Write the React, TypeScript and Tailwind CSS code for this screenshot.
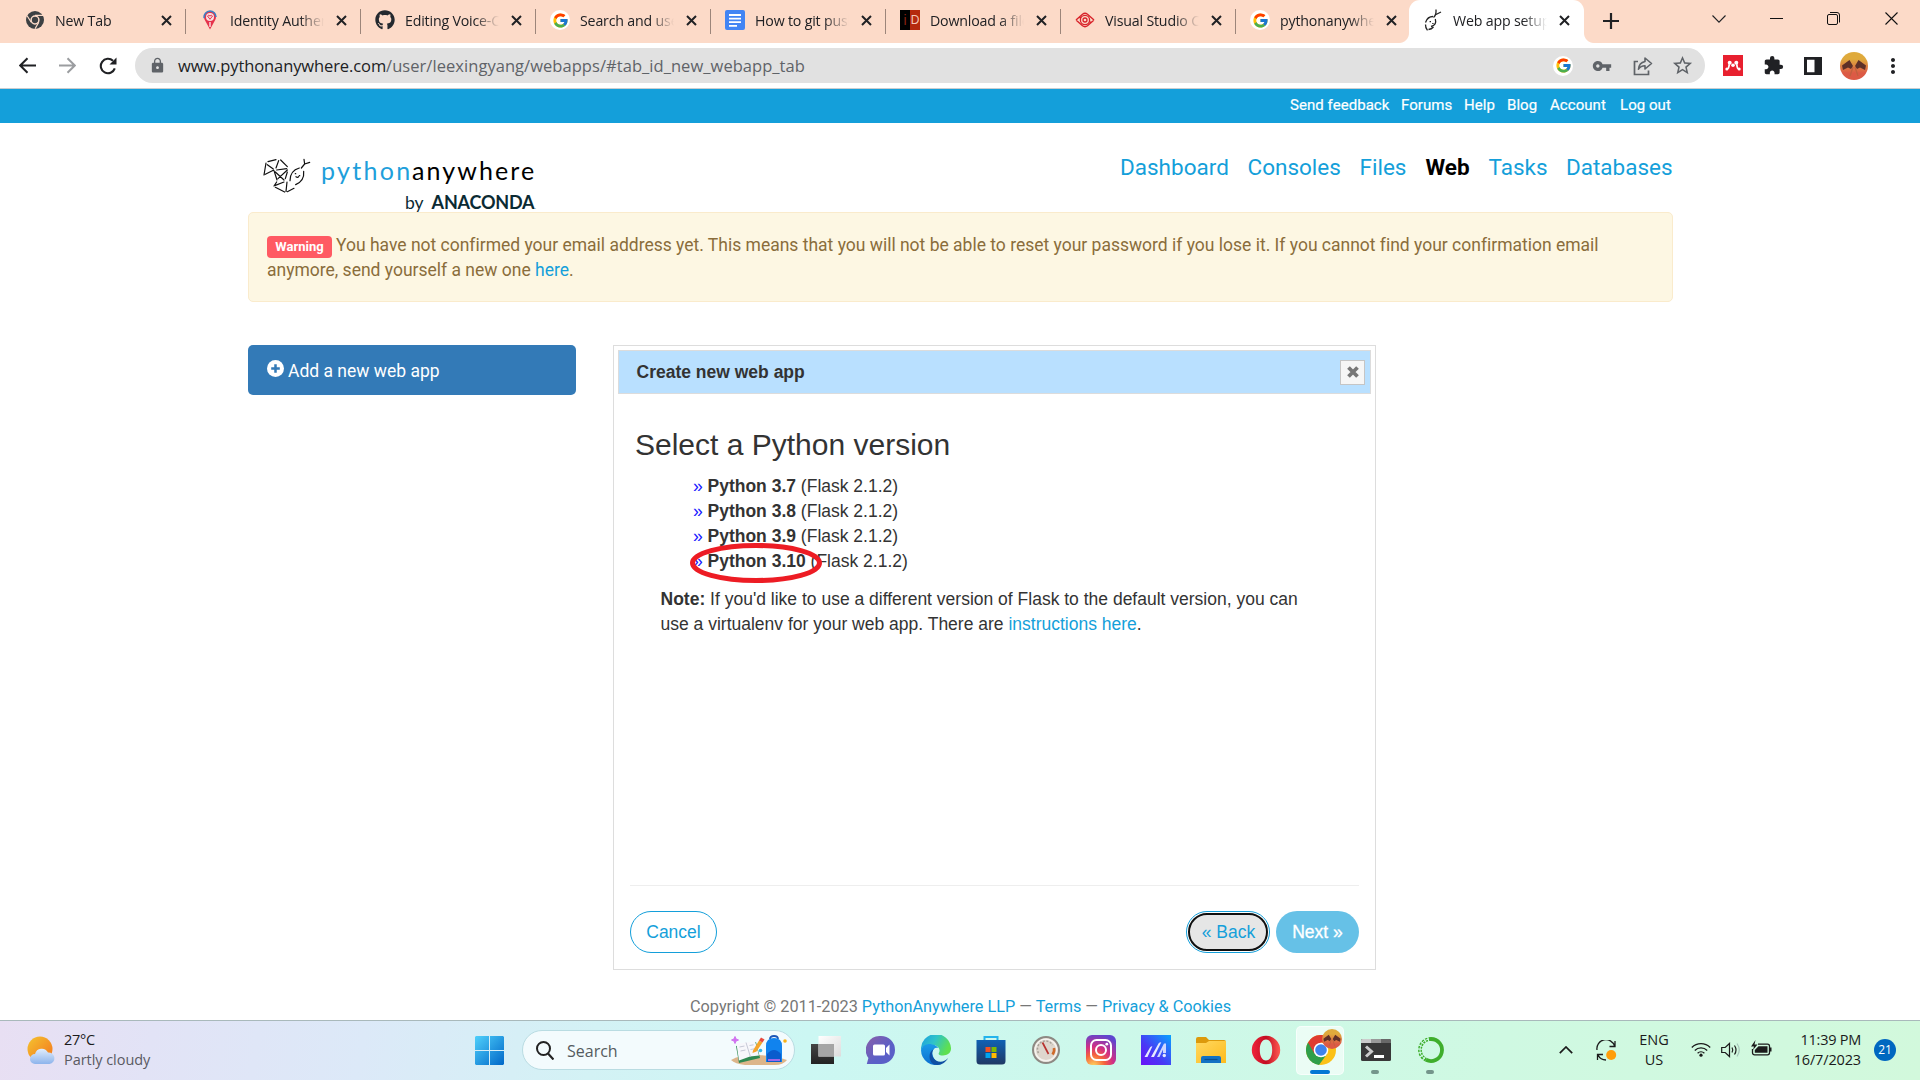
import React from "react";
import { FcGoogle } from "react-icons/fc";
import { FaGithub } from "react-icons/fa";
import { MdExtension, MdVpnKey, MdLock, MdStarBorder, MdMoreVert } from "react-icons/md";

const Svg = ({ w, h, vb, className = "", children }: { w: number; h: number; vb?: string; className?: string; children: React.ReactNode }) => (
  <svg width={w} height={h} viewBox={vb ?? `0 0 ${w} ${h}`} fill="none" className={`block shrink-0 ${className}`}>
    {children}
  </svg>
);

const GoogleBadge = () => (
  <span className="flex size-5 items-center justify-center rounded-full bg-white">
    <FcGoogle size={17} />
  </span>
);

const ChromeMono = () => (
  <Svg w={18} h={18}>
    <circle cx="9" cy="9" r="9" fill="#3c4043" />
    <circle cx="9" cy="9" r="3.9" fill="none" stroke="#fcdac8" strokeWidth="1.5" />
    <path d="M9 4.4h8M5.2 11.3L1.1 4.8M12.8 11.3L9 17.8" stroke="#fcdac8" strokeWidth="1.2" />
  </Svg>
);

const PinIcon = () => (
  <Svg w={14} h={20}>
    <path d="M7 19.5L1.8 10A6 6 0 1 1 12.2 10z" fill="#e5334b" />
    <path d="M1.2 8A6 6 0 0 1 7 1a6 6 0 0 1 6 6" stroke="#3d7fc4" strokeWidth="1.6" />
    <circle cx="7" cy="7" r="4" fill="#f9dfe0" />
    <path d="M4.5 6q1.2-1.5 2.5 0 1.3-1.5 2.5 0L7 9.3z" stroke="#e5334b" strokeWidth="1" />
    <path d="M7 12v5" stroke="#fff" strokeWidth="1.2" />
  </Svg>
);

const DocsIcon = () => (
  <Svg w={20} h={20}>
    <rect width="20" height="20" rx="2" fill="#4285f4" />
    <path d="M4 5h12M4 8.600h12M4 12.2h12M4 15.8h8" stroke="#fff" strokeWidth="1.8" />
  </Svg>
);

const IdIcon = () => (
  <span className="flex size-5 font-['Liberation_Sans'] text-[14px] leading-5">
    <span className="w-2.5 bg-black text-center text-[#8c2413]">i</span>
    <span className="w-2.5 bg-[#b5290e] text-center text-[12px] text-[#f3c7b9]">D</span>
  </span>
);

const EyeIcon = () => (
  <Svg w={20} h={16}>
    <path d="M1 8L7.5 2.2Q10 .3 12.5 2.2L19 8M1 8l6.5 5.8q2.5 1.9 5 0L19 8M4 5.2q6 .6 11.5 5.2" stroke="#d8232a" strokeWidth="1.4" />
    <circle cx="10" cy="8" r="4.6" stroke="#d8232a" strokeWidth="1.3" fill="#fcdac8" />
    <circle cx="10" cy="8" r="2" stroke="#d8232a" strokeWidth="1.3" />
  </Svg>
);

const SnakeIcon = () => (
  <Svg w={18} h={22}>
    <path d="M1.500 13.500Q3.500 7.500 9 7.500M11.300 10Q13 16 7 17.500M1.500 15.500Q1.300 18.500 3.500 21.300M4.500 20.500q3-.2 5-2.500M9.500 8.500q3-2.500 2.500-8M12 5.500L17 3" stroke="#222" strokeWidth="1.300" />
    <path d="M5.600 12.600h1.400M8.200 14.500h1.400" stroke="#222" strokeWidth="1.200" />
  </Svg>
);

const tabs = [
  { title: "New Tab", icon: <ChromeMono /> },
  { title: "Identity Authentication", icon: <PinIcon /> },
  { title: "Editing Voice-Chat", icon: <FaGithub size={20} color="#24292f" /> },
  { title: "Search and use", icon: <GoogleBadge /> },
  { title: "How to git push", icon: <DocsIcon /> },
  { title: "Download a file", icon: <IdIcon /> },
  { title: "Visual Studio Code", icon: <EyeIcon /> },
  { title: "pythonanywhere", icon: <GoogleBadge /> },
  { title: "Web app setup:", icon: <SnakeIcon />, active: true },
];

const Cross = () => (
  <Svg w={11} h={11}>
    <path d="M1 1l9 9M10 1l-9 9" stroke="#202124" strokeWidth="2" />
  </Svg>
);

function TabStrip() {
  return (
    <div className="flex h-[43px] bg-[#fcdac8] pl-[11px] font-['Open_Sans',sans-serif]">
      {tabs.map((t, i) => (
        <div key={i} className={`relative flex h-[43px] w-[175px] shrink-0 items-center pb-[3px] ${t.active ? "-ml-[2px] rounded-t-[11px] bg-white" : ""}`}>
          <div className="ml-[14px] flex w-5 justify-center">{t.icon}</div>
          <div className="ml-[10px] w-[94px] overflow-hidden whitespace-nowrap pt-px text-[14.200px] leading-[22px] tracking-[-0.180px] text-[#202124] [mask-image:linear-gradient(to_right,black_74%,transparent)]">{t.title}</div>
          <div className="ml-[12px]"><Cross /></div>
          {i < 7 && <div className="absolute right-0 top-[9px] h-[25px] w-px bg-[#9c857a]" />}
          {t.active && <div className="absolute -left-[10px] bottom-0 size-[10px] bg-[radial-gradient(circle_at_0_0,#fcdac8_9.5px,white_10.5px)]" />}
          {t.active && <div className="absolute -right-[10px] bottom-0 size-[10px] bg-[radial-gradient(circle_at_100%_0,#fcdac8_9.5px,white_10.5px)]" />}
        </div>
      ))}
      <Svg w={16} h={16} className="ml-[19px] mt-[13px]"><path d="M8 0v16M0 8h16" stroke="#202124" strokeWidth="2.2" /></Svg>
      <Svg w={14} h={8} className="ml-[93px] mt-[15px]"><path d="M.5 .5L7 7.2 13.5 .5" stroke="#202124" strokeWidth="1.1" /></Svg>
      <Svg w={13} h={2} className="ml-[44px] mt-[18px]"><path d="M0 .5h13" stroke="#111" /></Svg>
      <Svg w={13} h={13} className="ml-[44px] mt-[12px]">
        <rect x=".5" y="2.5" width="10" height="10" rx="1.5" stroke="#111" />
        <path d="M3 .5h7a2.5 2.5 0 0 1 2.5 2.5v7.5" stroke="#111" />
      </Svg>
      <Svg w={13} h={13} className="ml-[45px] mt-[12px]"><path d="M.5 .5l12 12M12.500 .5l-12 12" stroke="#111" strokeWidth="1.1" /></Svg>
    </div>
  );
}

const Avatar = ({ size }: { size: number }) => (
  <Svg w={size} h={size} vb="0 0 28 28">
    <defs>
      <linearGradient id="av" x1="0" y1="0" x2="0" y2="1"><stop offset=".25" stopColor="#dfaa3c" /><stop offset=".75" stopColor="#dc5a45" /></linearGradient>
    </defs>
    <circle cx="14" cy="14" r="14" fill="url(#av)" />
    <path d="M2 13.500L9.500 8l3.500 6-2 3-3-1.500L3 18zM26 13.500L18.500 8 15 14l2 3 3-1.500 5 2.500z" fill="#5e3028" />
    <path d="M13 15l-3 9M15 15l3 9" stroke="#c0603f" strokeWidth="1.300" />
  </Svg>
);

function Toolbar() {
  return (
    <div className="flex h-[45px] items-center bg-white pl-[19px]">
      <Svg w={17} h={17}><path d="M17 8.500H1.500M8.500 1.200L1.200 8.500l7.300 7.300" stroke="#202124" strokeWidth="2" /></Svg>
      <Svg w={17} h={17} className="ml-[23px]"><path d="M0 8.500h15.500M8.500 1.200l7.300 7.300-7.300 7.300" stroke="#9b9da0" strokeWidth="2" /></Svg>
      <Svg w={18} h={18} className="ml-[23px]">
        <path d="M15.800 11.400A7.200 7.200 0 1 1 14 3.800" stroke="#202124" strokeWidth="2.100" />
        <path d="M17.500 .5v7h-7z" fill="#202124" />
      </Svg>
      <div className="ml-[18px] flex h-[35px] w-[1570px] items-center rounded-full bg-[#e1e1e1] pl-[14px]">
        <MdLock size={17} color="#5f6368" />
        <div className="ml-[12px] whitespace-nowrap font-['Open_Sans',sans-serif] text-[16.500px] leading-6 text-[#5f6368]">
          <span className="tracking-[-0.1px] text-[#202124]">www.pythonanywhere.com</span><span className="tracking-[0.050px]">/user/leexingyang/webapps/#tab_id_new_webapp_tab</span>
        </div>
        <div className="ml-auto mr-[11px] flex items-center">
          <GoogleBadge />
          <MdVpnKey size={20} color="#5f6368" className="ml-[19px]" />
          <Svg w={20} h={20} className="ml-[21px]">
            <path d="M5 5.500H1.500v13h14v-4" stroke="#5f6368" strokeWidth="1.700" />
            <path d="M12 2l6.500 5.500L12 13v-3.200q-4.500 0-6.500 3.400.5-6.400 6.500-7.700z" stroke="#5f6368" strokeWidth="1.600" strokeLinejoin="round" />
          </Svg>
          <MdStarBorder size={23} color="#5f6368" className="ml-[18px]" />
        </div>
      </div>
      <Svg w={20} h={21} className="ml-[18px]">
        <rect width="20" height="21" fill="#e8202f" />
        <path d="M4 14.200q2-.7 2.200-5M16 14.200q-2-.7-2.200-5" stroke="#fff" strokeWidth="1.800" />
        <circle cx="6.700" cy="7.700" r="2" fill="#fff" /><circle cx="13.300" cy="7.700" r="2" fill="#fff" />
        <circle cx="10" cy="10.300" r="1.800" fill="#fff" /><circle cx="3.800" cy="14" r="1.500" fill="#fff" /><circle cx="16.200" cy="14" r="1.500" fill="#fff" />
      </Svg>
      <MdExtension size={21} color="#202124" className="ml-[20px]" />
      <Svg w={18} h={18} className="ml-[20px]"><path d="M0 0h18v18H0zM3 2.800v12.400h7.500V2.800z" fill="#202124" fillRule="evenodd" /></Svg>
      <span className="ml-[18px]"><Avatar size={28} /></span>
      <MdMoreVert size={24} color="#202124" className="ml-[13px]" />
    </div>
  );
}

function Logo() {
  return (
    <div className="relative h-[89px] w-[300px]">
      <div className="absolute left-[14px] top-[34px]">
        <Svg w={50} h={37} vb="34 35 150 111">
          <g stroke="#111" strokeWidth="3.600" strokeLinecap="round">
            <path d="M46 53l-6 36M52 49l24-6M84 46L76 68M90 44l20 20M50 58l18 13M44 87l24-12M78 74l30-4M70 76l9 28M74 80l26 24M82 100l28-26M110 80l-6 20M78 110l-8 12M74 120l26-10M74 126l28 14M109 110l-3 28M110 139l20-10" />
            <path d="M118 106Q118 76 146 68M159 78q3 28-24 40M152 68l10-12-2-14M162 56l15-5M136 94q5 4 8 0" />
            <path d="M134 85h1M146 91h1" strokeWidth="4" />
          </g>
        </Svg>
      </div>
      <div className="absolute left-[73px] top-[32px] flex whitespace-nowrap font-['Lato'] text-[25px] leading-[30px] text-black">
        <span className="w-[91px] tracking-[2.300px] text-[#1f9fdb]">python</span><span className="tracking-[2.100px]">anywhere</span>
      </div>
      <div className="absolute left-[157px] top-[67px] flex items-baseline whitespace-nowrap font-['Lato'] leading-[24px] text-[#0b2a33]">
        <span className="text-[17.500px]">by</span>
        <span className="ml-[8px] text-[18px] font-bold tracking-[-0.200px]">ANACONDA</span>
        <span className="text-[8px] text-gray-400">.</span>
      </div>
    </div>
  );
}

const Row = ({ v }: { v: string }) => (
  <li className="flex h-[25px] whitespace-pre">
    <span className="w-[14.500px] text-[#1a1aff]">»</span><span><b>Python {v}</b> (Flask 2.1.2)</span>
  </li>
);

function Wizard() {
  return (
    <div className="flex h-[625px] w-[763px] flex-col border border-[#ddd] px-1 pt-1 font-['Liberation_Sans',Arial,sans-serif] text-[17.500px] leading-[25px] text-[#333]">
      <div className="flex h-[44px] items-center border border-[#dcdcdc] bg-[#b9e0ff] pl-[17.500px] pr-[5px] font-bold">
        Create new web app
        <div className="ml-auto flex size-[25px] items-center justify-center border border-[#c5c5c5] bg-[#f6f6f6]">
          <Svg w={14} h={14}><path d="M2.500 2.500l9 9M11.500 2.500l-9 9" stroke="#777" strokeWidth="3.800" /></Svg>
        </div>
      </div>
      <h2 className="ml-[17px] mt-[33px] text-[30px] leading-[35px]">Select a Python version</h2>
      <ul className="ml-[75px] mt-[12px]">
        <Row v="3.7" />
        <Row v="3.8" />
        <Row v="3.9" />
        <li className="relative">
          <ul><Row v="3.10" /></ul>
          <Svg w={132} h={40} className="absolute -left-[3px] -top-[6px]"><ellipse cx="66" cy="20" rx="63.500" ry="17.500" stroke="#ed1c24" strokeWidth="5" /></Svg>
        </li>
      </ul>
      <p className="ml-[42.500px] mt-[13px] w-[670px]">
        <b>Note:</b> If you'd like to use a different version of Flask to the default version, you can use a virtualenv for your web app. There are <span className="text-[#149fda]">instructions here</span>.
      </p>
      <div className="mx-[12px] mb-[16px] mt-auto flex h-[68px] items-end border-t border-[#eee]">
        <button className="h-[42px] w-[87px] rounded-full border border-[#149fda] text-[#149fda]">Cancel</button>
        <button className="ml-auto h-[42px] w-[84px] rounded-full border border-[#149fda] bg-white p-px text-[#149fda]">
          <span className="flex h-[38px] items-center justify-center rounded-full border-2 border-[#101010] bg-[#e6e6e6] pl-px">« Back</span>
        </button>
        <button className="ml-[6px] h-[42px] w-[83px] rounded-full bg-[#66c1e7] text-white [-webkit-text-stroke:0.3px_white]">Next »</button>
      </div>
    </div>
  );
}

function Page() {
  return (
    <div className="flex h-[932px] flex-col bg-white font-['Roboto',sans-serif]">
      <div className="h-[35px] shrink-0 border-t border-[#c9cdd0] bg-[#149fda]">
        <div className="ml-[1290px] flex pt-[4px] text-[15px] leading-[24px] text-white [-webkit-text-stroke:0.2px_white]">
          <span className="w-[111px] tracking-[0.050px]">Send feedback</span>
          <span className="w-[63px] tracking-[0.050px]">Forums</span>
          <span className="w-[43px] tracking-[0.050px]">Help</span>
          <span className="w-[43px] tracking-[0.050px]">Blog</span>
          <span className="w-[70px] tracking-[0.050px]">Account</span>
          <span className="tracking-[0.050px]">Log out</span>
        </div>
      </div>
      <div className="ml-[248px] flex h-[89px] w-[1425px] shrink-0">
        <Logo />
        <nav className="ml-[572px] flex pt-[27px] text-[22.500px] leading-[34px] text-[#149fda]">
          <span className="w-[127.500px]">Dashboard</span>
          <span className="w-[112px]">Consoles</span>
          <span className="w-[66px]">Files</span>
          <span className="w-[63px] font-bold text-black">Web</span>
          <span className="w-[77.500px]">Tasks</span>
          <span>Databases</span>
        </nav>
      </div>
      <div className="ml-[248px] h-[90px] w-[1425px] shrink-0 rounded-[5px] border border-[#faebcc] bg-[#fdf7e3] pl-[18px] pt-[20px] text-[17.500px] leading-[25px] text-[#8a6d3b]">
        <div className="flex h-[25px] whitespace-nowrap">
          <span className="mr-[4px] mt-[3px] h-[22px] w-[65px] rounded-[4px] bg-[#ff5a63] text-center text-[13px] font-bold leading-[22px] text-white">Warning</span>
          <span className="tracking-[-0.005px]">You have not confirmed your email address yet. This means that you will not be able to reset your password if you lose it. If you cannot find your confirmation email</span>
        </div>
        <div>anymore, send yourself a new one <span className="text-[#149fda]">here</span>.</div>
      </div>
      <div className="ml-[248px] mt-[43px] flex items-start">
        <div className="mr-[37px] flex h-[50px] w-[328px] items-center rounded-[5px] bg-[#337ab7] pl-[19px] pt-px text-[17.500px] text-white">
          <Svg w={17} h={17} className="-mt-[4px] mr-[4px]">
            <circle cx="8.500" cy="8.500" r="8.500" fill="#fff" />
            <path d="M8.500 4.200v8.600M4.200 8.500h8.600" stroke="#337ab7" strokeWidth="2.500" />
          </Svg>
          <span className="pt-px">Add a new web app</span>
        </div>
        <Wizard />
      </div>
      <div className="ml-[690px] mt-[25px] whitespace-nowrap text-[16.250px] leading-[24px] text-[#777]">
        Copyright © 2011-2023 <span className="text-[#149fda]">PythonAnywhere LLP</span> — <span className="text-[#149fda]">Terms</span> — <span className="text-[#149fda]">Privacy &amp; Cookies</span>
      </div>
    </div>
  );
}

const apps: { icon: React.ReactNode; dot?: boolean; active?: boolean }[] = [
  { icon: (
    <Svg w={30} h={30}>
      <defs>
        <linearGradient id="tvd" x1="0" y1="0" x2="0" y2="1"><stop stopColor="#444" /><stop offset="1" stopColor="#222" /></linearGradient>
        <linearGradient id="tvl" x1="0" y1="0" x2="1" y2="1"><stop stopColor="#fff" /><stop offset="1" stopColor="#dcdcdc" /></linearGradient>
      </defs>
      <rect y="9" width="23" height="20" fill="url(#tvd)" /><rect x="7.500" y="1" width="22.500" height="20.500" fill="url(#tvl)" /><path d="M7.500 9H23v12.500H7.500z" fill="#a5a5a5" />
    </Svg>) },
  { icon: (
    <Svg w={30} h={30}>
      <defs><linearGradient id="ch" x1="0" y1="0" x2="1" y2="1"><stop stopColor="#8a5fa8" /><stop offset=".6" stopColor="#5b5fc7" /></linearGradient></defs>
      <path d="M15 1a14 14 0 1 1 0 28H.8l1.600-6A14 14 0 0 1 15 1z" fill="url(#ch)" />
      <rect x="7" y="9.500" width="12" height="11" rx="1.500" fill="#fff" /><path d="M20 13l3.500-3.500v11L20 17z" fill="#fff" />
    </Svg>) },
  { icon: (
    <Svg w={30} h={30}>
      <defs>
        <linearGradient id="e1" x1="0" y1="0" x2="1" y2=".4"><stop stopColor="#1b9de2" /><stop offset=".5" stopColor="#2fc3c9" /><stop offset="1" stopColor="#5fe04f" /></linearGradient>
        <linearGradient id="e2" x1="0" y1="0" x2="0" y2="1"><stop stopColor="#1a9be8" /><stop offset="1" stopColor="#0c6fd0" /></linearGradient>
      </defs>
      <path d="M0 15A15 15 0 0 1 30 13c.3 5-3.500 7.500-8 7.500-4 0-5-1.300-4-2.800C20 14 16.500 10 12 10 6 9 2 11 0 15z" fill="url(#e1)" />
      <path d="M0 15c1.500-5 7-7 11.500-5.500 3 .5 5 2 6 3.500-4-1-7 2-6 6.500 1 5 5 8.500 9 9.500A15 15 0 0 1 0 15z" fill="url(#e2)" />
      <path d="M13 14c-3 3-2.500 9 2 11.500 4 2.200 8.500 1.500 12-2.500-3 6-9 8-14 6.500C7 27 7 16 13 14z" fill="#0f4fa3" />
    </Svg>) },
  { icon: (
    <Svg w={30} h={30}>
      <defs><linearGradient id="st" x1="0" y1="0" x2="0" y2="1"><stop stopColor="#0f61b4" /><stop offset="1" stopColor="#203864" /></linearGradient></defs>
      <path d="M8.500 6V2h13v4" stroke="#23b4ec" strokeWidth="2" />
      <path d="M.5 5h29v21a3.500 3.500 0 0 1-3.500 3.500H4A3.500 3.500 0 0 1 .5 26z" fill="url(#st)" />
      <path d="M9.500 12h5v5h-5z" fill="#f25022" /><path d="M15.500 12h5v5h-5z" fill="#7fba00" /><path d="M9.500 18h5v5h-5z" fill="#00a4ef" /><path d="M15.500 18h5v5h-5z" fill="#ffb900" />
    </Svg>) },
  { icon: (
    <Svg w={30} h={30}>
      <circle cx="15" cy="15" r="13" fill="#ded6cd" stroke="#8d8983" strokeWidth="2" /><circle cx="15" cy="15" r="10.800" stroke="#f5f3ef" strokeWidth="1.500" />
      <path d="M7.500 18a8 8 0 0 1 14-8" stroke="#a8a199" strokeWidth="1.600" strokeDasharray="2 1.500" /><path d="M23 13a8 8 0 0 1-1.500 6.500" stroke="#cf6a2a" strokeWidth="2.600" />
      <path d="M11.500 7.500l6 11.500" stroke="#b8322f" strokeWidth="1.700" />
    </Svg>) },
  { icon: (
    <Svg w={30} h={30}>
      <defs><radialGradient id="ig" cx=".25" cy="1.050" r="1.100"><stop offset=".05" stopColor="#fecb5a" /><stop offset=".35" stopColor="#f5633c" /><stop offset=".6" stopColor="#d22f85" /><stop offset="1" stopColor="#5f45cf" /></radialGradient></defs>
      <rect width="30" height="30" rx="6" fill="url(#ig)" /><rect x="5" y="5" width="20" height="20" rx="5.500" stroke="#fff" strokeWidth="2" /><circle cx="15" cy="15" r="5" stroke="#fff" strokeWidth="2" /><circle cx="20.800" cy="9.200" r="1.400" fill="#fff" />
    </Svg>) },
  { icon: (
    <Svg w={30} h={30}>
      <defs><linearGradient id="ma" x1="1" y1="0" x2="0" y2="1"><stop stopColor="#08a2ff" /><stop offset=".6" stopColor="#4a37f5" /><stop offset="1" stopColor="#6a12f8" /></linearGradient></defs>
      <rect width="30" height="30" fill="url(#ma)" />
      <path d="M3.500 22L9 12.500q.8-1.300 2.400-1.300L6.500 22zM10 22l7.500-13.500q.8-1.200 2.800-1.200L13 22z" fill="#e6e9ff" /><path d="M16 22L23 8.500h2V18h-3v-3.500L18.500 22z" fill="#cfd6ff" /><circle cx="23.300" cy="20.500" r="1.700" fill="#e6e9ff" />
    </Svg>) },
  { icon: (
    <Svg w={30} h={30}>
      <defs><linearGradient id="fo" x1="0" y1="0" x2="1" y2="1"><stop stopColor="#ffd860" /><stop offset="1" stopColor="#fdbb1d" /></linearGradient></defs>
      <path d="M0 4a2 2 0 0 1 2-2h8l3 3h15a2 2 0 0 1 2 2v6H0z" fill="#dc9a0c" /><path d="M0 8h10l3-2h17v22H0z" fill="url(#fo)" />
      <path d="M5 28v-5a2 2 0 0 1 2-2h16a2 2 0 0 1 2 2v5z" fill="#1372c4" /><path d="M8.500 24.500h13" stroke="#0b4f91" strokeWidth="1.200" />
    </Svg>) },
  { icon: (
    <Svg w={30} h={30}>
      <defs><linearGradient id="op" x1="0" y1="0" x2="1" y2="0"><stop stopColor="#f0233a" /><stop offset=".5" stopColor="#c20d22" /><stop offset="1" stopColor="#ff5a52" /></linearGradient></defs>
      <path fillRule="evenodd" d="M15 .8a14.200 14.200 0 1 1 0 28.400 14.200 14.200 0 0 1 0-28.400zM15 4.500C11 4.500 8.800 9 8.800 15S11 25.500 15 25.500 21.200 21 21.200 15 19 4.500 15 4.500z" fill="url(#op)" />
    </Svg>) },
  { active: true, icon: (
    <Svg w={30} h={30}>
      <circle cx="15" cy="15" r="15" fill="#fbc116" />
      <path d="M15 15L2 7.500A15 15 0 0 0 13 29.900L21 19z" fill="#2f9f4a" /><path d="M2 7.500a15 15 0 0 1 26 0H15L8.500 18.700z" fill="#df3b30" />
      <circle cx="15" cy="15" r="7.300" fill="#fff" /><circle cx="15" cy="15" r="5.800" fill="#3f83ec" />
    </Svg>) },
  { dot: true, icon: (
    <Svg w={30} h={30}>
      <rect y="4" width="30" height="22" rx="1.500" fill="#383838" /><path d="M0 8V5.500A1.500 1.500 0 0 1 1.500 4H10v4z" fill="#ccc" /><path d="M10 4h10v4H10z" fill="#999" /><path d="M20 4h8.500A1.500 1.500 0 0 1 30 5.500V8H20z" fill="#686868" />
      <path d="M5 11.500l5.500 5-5.500 5" stroke="#ccc" strokeWidth="3" /><path d="M13 21.500h10" stroke="#fff" strokeWidth="3" />
    </Svg>) },
  { dot: true, icon: (
    <Svg w={30} h={30}>
      <path d="M15 4a11 11 0 1 1-5 20.800" stroke="#3fae2c" strokeWidth="3.800" />
      <path d="M15 4a11 11 0 0 0-5 20.800" stroke="#3fae2c" strokeWidth="3.800" strokeDasharray="2.200 1.200" />
      <path d="M13 4a11 11 0 0 0-4 20" stroke="#cdf8e6" strokeWidth="1" />
    </Svg>) },
];

function Taskbar() {
  return (
    <div className="flex h-[60px] border-t border-[#a9b9bb] bg-[linear-gradient(100deg,#e8dff3_0%,#e2e3f6_8%,#dce9f8_19%,#d3f2f5_31%,#ccf7f3_42%,#cdf8ea_58%,#cff9e2_78%,#d2f9dc_100%)] font-['Open_Sans',sans-serif] text-[14.500px] leading-[20px]">
      <div className="flex w-[475px] pl-[27px] pt-[14px]">
        <Svg w={29} h={32}>
          <defs>
            <linearGradient id="sun" x1="0" y1="0" x2="1" y2="1"><stop stopColor="#f4c430" /><stop offset="1" stopColor="#f4731c" /></linearGradient>
            <linearGradient id="cl" x1="0" y1="0" x2="0" y2="1"><stop stopColor="#e1edfc" /><stop offset="1" stopColor="#8db4ec" /></linearGradient>
          </defs>
          <circle cx="13" cy="14" r="12.500" fill="url(#sun)" />
          <path d="M8 29a5 5 0 0 1 0-10 7 7 0 0 1 13-1.500A5.800 5.800 0 0 1 22.500 29z" fill="url(#cl)" />
        </Svg>
        <div className="-mt-[5px] ml-[8px] whitespace-nowrap">
          <div className="tracking-[-0.300px] text-[#1b1b1b]">27°C</div>
          <div className="tracking-[-0.050px] text-[#5a5a62]">Partly cloudy</div>
        </div>
      </div>
      <Svg w={29} h={29} className="mt-[15px]">
        <defs><linearGradient id="win" x1="0" y1="0" x2="1" y2="1"><stop stopColor="#4fd0fb" /><stop offset="1" stopColor="#0067c8" /></linearGradient></defs>
        <path d="M1 0h13v14H0V1zM15 0h13l1 1v13H15zM0 15h14v14H1l-1-1zM15 15h14v13l-1 1H15z" fill="url(#win)" />
      </Svg>
      <div className="ml-[18px] mt-[9px] flex h-[40px] w-[273px] items-center rounded-full border border-[#b9dce2] bg-[#f3fbfd] pl-[13px]">
        <Svg w={18} h={19}><circle cx="7.500" cy="7.500" r="6.500" stroke="#222" strokeWidth="2" /><path d="M12 12.500l5.500 6" stroke="#222" strokeWidth="2.200" /></Svg>
        <span className="ml-[13px] pt-[2px] text-[16px] text-[#555b5f]">Search</span>
        <Svg w={60} h={32} className="ml-auto mr-[5px]">
          <path d="M2 26Q12 20 30 21t28 5q-4 5-12 5H16Q6 30 2 26z" fill="#dcb58a" />
          <path d="M7 12l20-4 4 16-21 5z" fill="#2f8a52" /><path d="M7.500 10l9.500-1.500L26 7l4 14.500-9 1-11 4z" fill="#f7f7fb" /><path d="M17 8.500L21.500 23M10.500 13l5-1M11.500 17l5-1M20.500 11.500l4-.7M21.500 15.500l4-.7" stroke="#b9bccd" strokeWidth=".8" />
          <path d="M24 16.500l6-10 3.500 2-6 9-4 1.500z" fill="#f5a52b" /><path d="M30 6.500l2-3 3.500 2-2 3z" fill="#ea4a3f" />
          <path d="M41 5q0-3 4-3t4 3" stroke="#1c56b8" strokeWidth="1.800" /><path d="M37 12q0-8 8-8t8 8v16H37z" fill="#1183ee" /><path d="M38 20q7-8 14 0v8H38z" fill="#0a5ccd" /><path d="M39 26h12" stroke="#a066e8" strokeWidth="2" />
          <path d="M6 2.500l1 2.500 2.500 1L7 7 6 9.500 5 7 2.500 6 5 5z" fill="#d070f0" stroke="#d070f0" /><circle cx="31.500" cy="16.500" r="1.800" fill="#35b6e8" /><circle cx="56" cy="7" r="1.800" fill="#f9b115" />
        </Svg>
      </div>
      <div className="ml-[3px] flex">
        {apps.map((a, i) => (
          <div key={i} className="relative flex h-[59px] w-[55px] justify-center">
            {a.active && <div className="absolute left-[3px] top-[5px] h-[49px] w-[48px] rounded-[5px] border border-white/60 bg-white/60" />}
            <div className="relative mt-[14px]">{a.icon}</div>
            {a.active && <div className="absolute left-[29px] top-[8px]"><Avatar size={20} /></div>}
            {a.active && <div className="absolute left-[17px] top-[49px] h-1 w-5 rounded-full bg-[#0078d4]" />}
            {a.dot && <div className="absolute left-[23px] top-[49px] h-1 w-2 rounded-full bg-[#74958b]" />}
          </div>
        ))}
      </div>
      <Svg w={14} h={8} className="ml-[101px] mt-[25px]"><path d="M.8 7.200L7 1l6.200 6.200" stroke="#1b1b1b" strokeWidth="1.700" /></Svg>
      <Svg w={21} h={21} className="ml-[23px] mt-[19px]">
        <path d="M1 10A9 9 0 0 1 18.500 6M19 1v5.500h-5.500M1.500 20v-5.500H7M2 15a9 9 0 0 0 8 5" stroke="#1b1b1b" strokeWidth="1.300" /><circle cx="15.200" cy="15" r="5" fill="#ff9d0a" />
      </Svg>
      <div className="ml-[21px] mt-[9px] w-[32px] text-center leading-[20px] text-[#1b1b1b]">ENG<br />US</div>
      <Svg w={20} h={15} className="ml-[21px] mt-[21px]">
        <path d="M.8 5.500a13 13 0 0 1 18.400 0M3.800 8.500a8.700 8.700 0 0 1 12.400 0M6.600 11.200a4.900 4.900 0 0 1 6.800 0" stroke="#1b1b1b" strokeWidth="1.300" /><circle cx="10" cy="13.200" r="1.600" fill="#1b1b1b" />
      </Svg>
      <Svg w={20} h={16} className="ml-[10px] mt-[21px]">
        <path d="M.7 5.500h3.500L8.500 1.500v13L4.200 10.500H.7z" stroke="#1b1b1b" strokeWidth="1.200" /><path d="M11 5.500q1.500 2.500 0 5M13.500 3.500q3 4.500 0 9" stroke="#1b1b1b" strokeWidth="1.200" /><path d="M16 1.500q4.500 6.500 0 13" stroke="#a5c5b8" strokeWidth="1.200" />
      </Svg>
      <Svg w={21} h={16} className="ml-[10px] mt-[19px]">
        <path d="M7 4.200h9.500a2 2 0 0 1 2 2v6.600a2 2 0 0 1-2 2H3.500a2 2 0 0 1-2-2V9" stroke="#1b1b1b" strokeWidth="1.300" /><path d="M7.500 6.300H16.500v6.500H3.800V10z" fill="#1b1b1b" /><path d="M4.500 0L0 6.500h3L2 10l4.500-5.500h-3zM19 7.500h1.500v4H19z" fill="#1b1b1b" />
      </Svg>
      <div className="ml-[10px] mt-[9px] w-[79px] whitespace-nowrap text-right text-[#1b1b1b]"><span className="tracking-[-0.250px]">11:39 PM</span><br /><span className="tracking-[-0.150px]">16/7/2023</span></div>
      <div className="ml-[13px] mt-[18px] size-[22px] rounded-full bg-[#0067c0] text-center text-[12px] leading-[21px] text-white">21</div>
    </div>
  );
}

export default function App() {
  return (
    <div className="flex h-[1080px] w-[1920px] flex-col overflow-hidden bg-white">
      <TabStrip />
      <Toolbar />
      <Page />
      <Taskbar />
    </div>
  );
}
